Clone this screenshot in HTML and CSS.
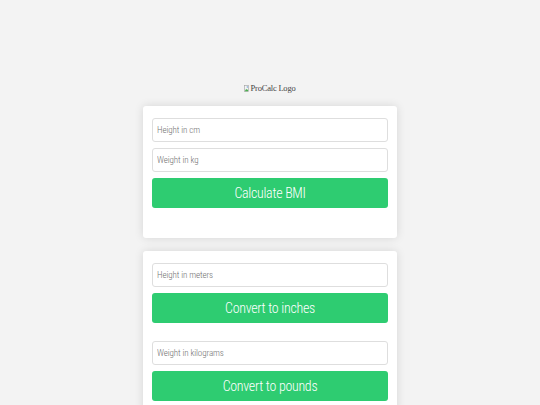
FILE: index.html
```html
<!DOCTYPE html>
<html lang="en">
<head>
<meta charset="utf-8">
<title>ProCalc</title>
<link rel="stylesheet" href="styles.css">
</head>
<body>
<header class="header">
  <div class="logo">
    <svg class="logo-icon" width="5" height="7" viewBox="0 0 5 7" aria-hidden="true">
      <rect x="0.4" y="0.4" width="4.2" height="6.2" fill="#f4f4f4" stroke="#a0a0a0" stroke-width="0.6"/>
      <path d="M0.8 6.2 L2.2 3.8 L3.1 5.1 L3.7 4.3 L4.3 6.2 Z" fill="#4caf50"/>
      <circle cx="3.3" cy="2" r="0.7" fill="#6aa0d8"/>
    </svg>
    <span class="logo-text">ProCalc Logo</span>
  </div>
</header>
<main class="container">
  <section class="card">
    <input class="field" type="text" placeholder="Height in cm">
    <input class="field" type="text" placeholder="Weight in kg">
    <button class="btn">Calculate BMI</button>
    <div class="result"></div>
  </section>
  <section class="card">
    <div class="group">
      <input class="field" type="text" placeholder="Height in meters">
      <button class="btn">Convert to inches</button>
    </div>
    <div class="group">
      <input class="field" type="text" placeholder="Weight in kilograms">
      <button class="btn">Convert to pounds</button>
    </div>
  </section>
</main>
</body>
</html>
```
FILE: styles.css
```css
* { box-sizing: border-box; }
html, body { margin: 0; padding: 0; }
body {
  background: #f3f3f3;
  font-family: "Roboto Condensed", "Liberation Sans", Arial, sans-serif;
}
.header {
  display: flex;
  justify-content: center;
  padding-top: 82px;
  height: 106px;
}
.logo {
  display: flex;
  align-items: center;
  gap: 1px;
  height: 12px;
}
.logo-icon { display: block; }
.logo-text {
  font-family: "Liberation Serif", "Times New Roman", serif;
  font-size: 8.5px;
  color: #444;
  letter-spacing: -0.2px;
}
.container {
  width: 254px;
  margin: 0 auto;
  display: flex;
  flex-direction: column;
  gap: 13px;
}
.card {
  background: #fff;
  border-radius: 3px;
  box-shadow: 0 0 10px rgba(0,0,0,0.12);
  padding: 12px 9px;
  display: flex;
  flex-direction: column;
  gap: 6px;
}
.result { height: 12px; }
.group {
  display: flex;
  flex-direction: column;
  gap: 6px;
}
.group + .group { margin-top: 12px; }
.field {
  display: block;
  width: 100%;
  height: 24px;
  border: 1px solid #dedede;
  border-radius: 3px;
  padding: 0 4px;
  font-family: inherit;
  font-size: 9px;
  font-weight: 300;
  letter-spacing: -0.1px;
  color: #333;
  background: #fff;
  outline: none;
}
.field::placeholder { color: #707070; }
.btn {
  display: block;
  width: 100%;
  height: 30px;
  border: none;
  border-radius: 3px;
  background: #2ecc71;
  color: #fff;
  font-family: inherit;
  font-size: 14px;
  font-weight: 300;
  letter-spacing: -0.3px;
  padding: 0;
  cursor: pointer;
}
```
